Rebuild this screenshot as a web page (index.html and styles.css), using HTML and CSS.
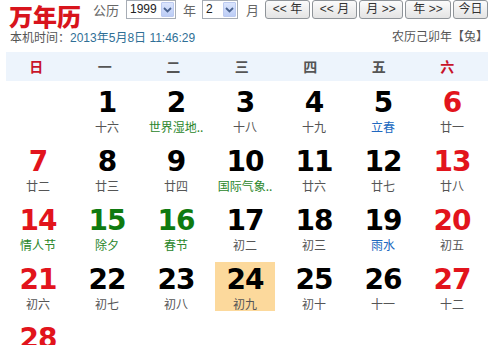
FILE: index.html
```html
<!DOCTYPE html>
<html lang="zh-CN">
<head>
<meta charset="utf-8">
<title>万年历</title>
<link rel="stylesheet" href="styles.css">
</head>
<body>
<div class="topbar">
  <div class="logo">万年历</div>
  <span class="lbl lbl-gl">公历</span>
  <div class="sel sel-year"><span class="sel-val">1999</span><span class="sel-arrow"><svg width="9" height="6" viewBox="0 0 9 6"><path d="M1 1 L4.5 4.5 L8 1" fill="none" stroke="#4a6390" stroke-width="1.8"/></svg></span></div>
  <span class="lbl lbl-y">年</span>
  <div class="sel sel-month"><span class="sel-val">2</span><span class="sel-arrow"><svg width="9" height="6" viewBox="0 0 9 6"><path d="M1 1 L4.5 4.5 L8 1" fill="none" stroke="#4a6390" stroke-width="1.8"/></svg></span></div>
  <span class="lbl lbl-m">月</span>
  <div class="btns">
    <button class="btn w45">&lt;&lt; 年</button>
    <button class="btn w45">&lt;&lt; 月</button>
    <button class="btn w44">月 &gt;&gt;</button>
    <button class="btn w46">年 &gt;&gt;</button>
    <button class="btn w35">今日</button>
  </div>
</div>
<div class="info">
  <div class="now"><span class="now-lbl">本机时间：</span><span class="now-val">2013年5月8日 11:46:29</span></div>
  <div class="lunar-year">农历己卯年【兔】</div>
</div>
<div class="weekhead">
  <div class="wh red">日</div>
  <div class="wh">一</div>
  <div class="wh">二</div>
  <div class="wh">三</div>
  <div class="wh">四</div>
  <div class="wh">五</div>
  <div class="wh red">六</div>
</div>
<div class="days">
  <div class="day empty"></div>
  <div class="day"><div class="num">1</div><div class="lunar">十六</div></div>
  <div class="day"><div class="num">2</div><div class="lunar fest">世界湿地..</div></div>
  <div class="day"><div class="num">3</div><div class="lunar">十八</div></div>
  <div class="day"><div class="num">4</div><div class="lunar">十九</div></div>
  <div class="day"><div class="num">5</div><div class="lunar term">立春</div></div>
  <div class="day"><div class="num red">6</div><div class="lunar">廿一</div></div>

  <div class="day"><div class="num red">7</div><div class="lunar">廿二</div></div>
  <div class="day"><div class="num">8</div><div class="lunar">廿三</div></div>
  <div class="day"><div class="num">9</div><div class="lunar">廿四</div></div>
  <div class="day"><div class="num">10</div><div class="lunar fest">国际气象..</div></div>
  <div class="day"><div class="num">11</div><div class="lunar">廿六</div></div>
  <div class="day"><div class="num">12</div><div class="lunar">廿七</div></div>
  <div class="day"><div class="num red">13</div><div class="lunar">廿八</div></div>

  <div class="day"><div class="num red">14</div><div class="lunar fest">情人节</div></div>
  <div class="day"><div class="num green">15</div><div class="lunar fest">除夕</div></div>
  <div class="day"><div class="num green">16</div><div class="lunar fest">春节</div></div>
  <div class="day"><div class="num">17</div><div class="lunar">初二</div></div>
  <div class="day"><div class="num">18</div><div class="lunar">初三</div></div>
  <div class="day"><div class="num">19</div><div class="lunar term">雨水</div></div>
  <div class="day"><div class="num red">20</div><div class="lunar">初五</div></div>

  <div class="day"><div class="num red">21</div><div class="lunar">初六</div></div>
  <div class="day"><div class="num">22</div><div class="lunar">初七</div></div>
  <div class="day"><div class="num">23</div><div class="lunar">初八</div></div>
  <div class="day today"><div class="num">24</div><div class="lunar">初九</div></div>
  <div class="day"><div class="num">25</div><div class="lunar">初十</div></div>
  <div class="day"><div class="num">26</div><div class="lunar">十一</div></div>
  <div class="day"><div class="num red">27</div><div class="lunar">十二</div></div>

  <div class="day"><div class="num red">28</div><div class="lunar">十三</div></div>
</div>
</body>
</html>
```
FILE: styles.css
```css
* { box-sizing: border-box; }
html, body {
  margin: 0;
  padding: 0;
  background: #fff;
}
body {
  width: 500px;
  height: 345px;
  overflow: hidden;
  font-family: "Liberation Sans", "Noto Sans CJK SC", sans-serif;
  color: #333;
}

.topbar {
  display: flex;
  align-items: flex-start;
  height: 29px;
}
.logo {
  padding-left: 9px;
  padding-top: 3px;
  font-family: "Noto Sans CJK SC", sans-serif;
  font-weight: 900;
  font-size: 24px;
  line-height: 26px;
  color: #d8141c;
}
.lbl {
  font-family: "Noto Sans CJK SC", sans-serif;
  font-size: 13px;
  line-height: 19px;
  color: #666;
}
.lbl-gl { margin-left: 12px; }
.lbl-y { margin-left: 7px; }
.lbl-m { margin-left: 8px; }

.sel {
  display: flex;
  align-items: stretch;
  height: 19px;
  border: 1px solid #a7adb5;
  background: #fff;
  padding: 1px;
}
.sel-year { width: 50px; margin-left: 7px; }
.sel-month { width: 36px; margin-left: 6px; }
.sel-val {
  flex: 1;
  font-size: 12px;
  line-height: 15px;
  padding-left: 2px;
  color: #222;
}
.sel-arrow {
  width: 13px;
  display: flex;
  align-items: center;
  justify-content: center;
  background: linear-gradient(#dbe5fd, #bccdf6);
  border: 1px solid #bccaf0;
  border-radius: 1px;
}

.btns {
  display: flex;
  gap: 2px;
  margin-left: 6px;
}
.btn {
  height: 19px;
  padding: 0;
  margin: 0;
  border: 1px solid #8f9499;
  border-radius: 3px;
  background: linear-gradient(#fbfbfb, #e4e4e4);
  font-family: "Liberation Sans", "Noto Sans CJK SC", sans-serif;
  font-size: 12px;
  line-height: 17px;
  color: #333;
  text-align: center;
}
.w45 { width: 45px; }
.w44 { width: 44px; }
.w46 { width: 46px; }
.w35 { width: 35px; }

.info {
  display: flex;
  justify-content: space-between;
  align-items: flex-start;
  padding: 0 12px 0 10px;
  height: 23px;
  font-family: "Liberation Sans", "Noto Sans CJK SC", sans-serif;
  font-size: 12px;
  line-height: 16px;
}
.now { padding-top: 1px; }
.now-lbl { color: #555; }
.now-val { color: #2f6f96; }
.lunar-year { color: #555; }

.weekhead {
  display: grid;
  grid-template-columns: repeat(7, 68.5px);
  margin: 0 12px 0 6px;
  height: 29px;
  background: #edf4fc;
}
.wh {
  padding-right: 8px;
  text-align: center;
  font-family: "Noto Sans CJK SC", sans-serif;
  font-size: 14px;
  font-weight: bold;
  line-height: 29px;
  color: #555;
}
.wh.red { color: #c8142a; }

.days {
  display: grid;
  grid-template-columns: repeat(7, 60px);
  grid-auto-rows: 49px;
  column-gap: 9px;
  row-gap: 10px;
  margin: 4px 0 0 8px;
}
.day {
  padding-top: 4px;
  text-align: center;
}
.day.today { background: #fcd99c; }
.num {
  font-family: "DejaVu Sans", sans-serif;
  font-weight: bold;
  font-size: 28px;
  line-height: 28px;
  letter-spacing: -1px;
  color: #000;
}
.num.red { color: #e2141c; }
.num.green { color: #0f7a10; }
.lunar {
  margin-top: 3px;
  font-family: "Noto Sans CJK SC", sans-serif;
  font-size: 12px;
  line-height: 14px;
  color: #555;
  white-space: nowrap;
}
.lunar.fest { color: #2a862a; }
.lunar.term { color: #2068c0; }
```
